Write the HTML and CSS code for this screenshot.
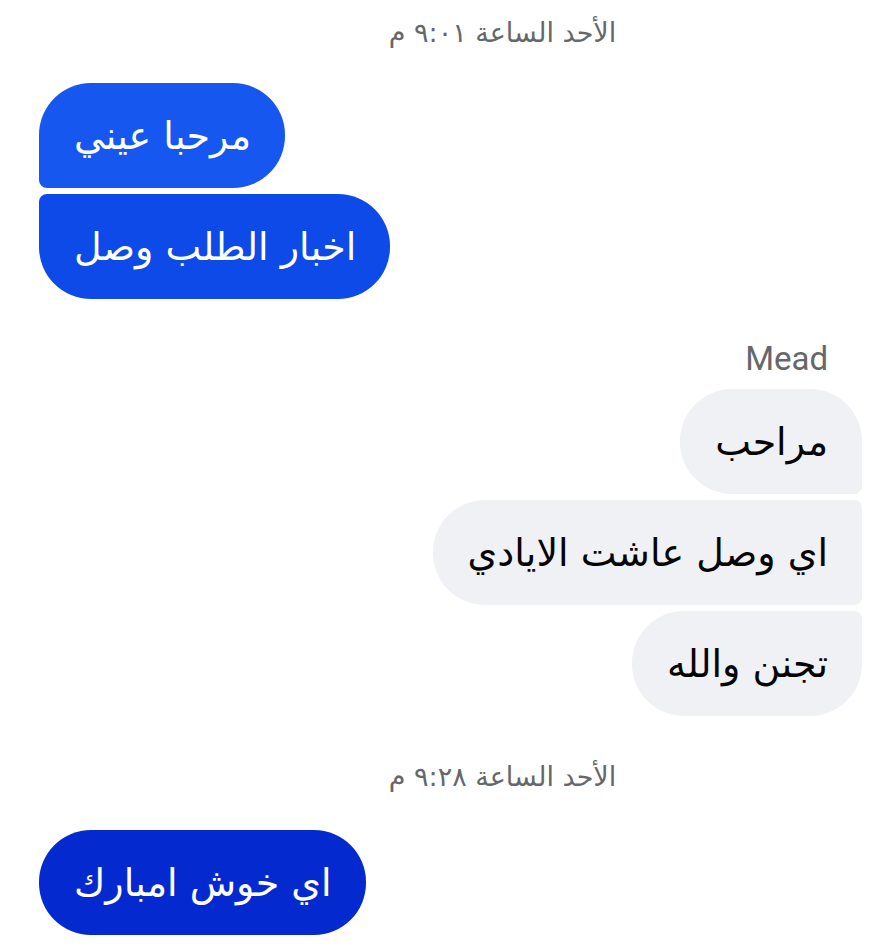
FILE: index.html
```html
<!DOCTYPE html>
<html lang="ar" dir="rtl">
<head>
<meta charset="utf-8">
<title>Chat</title>
<link rel="stylesheet" href="styles.css">
</head>
<body>
<main class="chat">
  <div class="stamp stamp-first">الأحد الساعة ٩:٠١ م</div>
  <div class="group me">
    <div class="bubble me-1 first">مرحبا عيني</div>
    <div class="bubble me-2 last">اخبار الطلب وصل</div>
  </div>
  <div class="group them">
    <div class="name" dir="ltr">Mead</div>
    <div class="bubble gray first">مراحب</div>
    <div class="bubble gray mid">اي وصل عاشت الايادي</div>
    <div class="bubble gray last">تجنن والله</div>
  </div>
  <div class="stamp stamp-second">الأحد الساعة ٩:٢٨ م</div>
  <div class="group me">
    <div class="bubble me-3 single">اي خوش امبارك</div>
  </div>
</main>
</body>
</html>
```
FILE: styles.css
```css
html, body {
  margin: 0;
  padding: 0;
  background: #ffffff;
}
body {
  font-family: "DejaVu Sans", "Noto Sans", sans-serif;
  width: 889px;
  height: 947px;
  overflow: hidden;
}
.chat {
  display: flex;
  flex-direction: column;
  padding: 18px 27px 0 39px;
}
.stamp {
  text-align: center;
  color: #65676b;
  font-size: 27px;
  line-height: 30px;
  padding-left: 104px;
}
.stamp-second {
  margin-top: 46px;
}
.group {
  display: flex;
  flex-direction: column;
  gap: 6px;
}
.group.me {
  align-items: flex-end;
  margin-top: 35px;
}
.stamp-second + .group.me {
  margin-top: 38px;
}
.group.them {
  align-items: flex-start;
  margin-top: 43px;
}
.name {
  font-family: Roboto, "Liberation Sans", sans-serif;
  font-size: 33px;
  line-height: 34px;
  color: #65676b;
  margin-right: 34px;
  margin-bottom: 7px;
}
.bubble {
  box-sizing: border-box;
  height: 105px;
  display: flex;
  align-items: center;
  padding: 0 34px 0 35px;
  font-size: 38px;
  border-radius: 52px;
}
.me-1 { background: #1557ef; color: #fff; }
.me-2 { background: #0d4ae7; color: #fff; }
.me-3 { background: #042acf; color: #fff; }
.gray { background: #f0f1f5; color: #050505; }

.me .first { border-bottom-left-radius: 8px; }
.me .last { border-top-left-radius: 8px; }
.them .first { border-bottom-right-radius: 8px; }
.them .mid { border-top-right-radius: 8px; border-bottom-right-radius: 8px; }
.them .last { border-top-right-radius: 8px; }
```
